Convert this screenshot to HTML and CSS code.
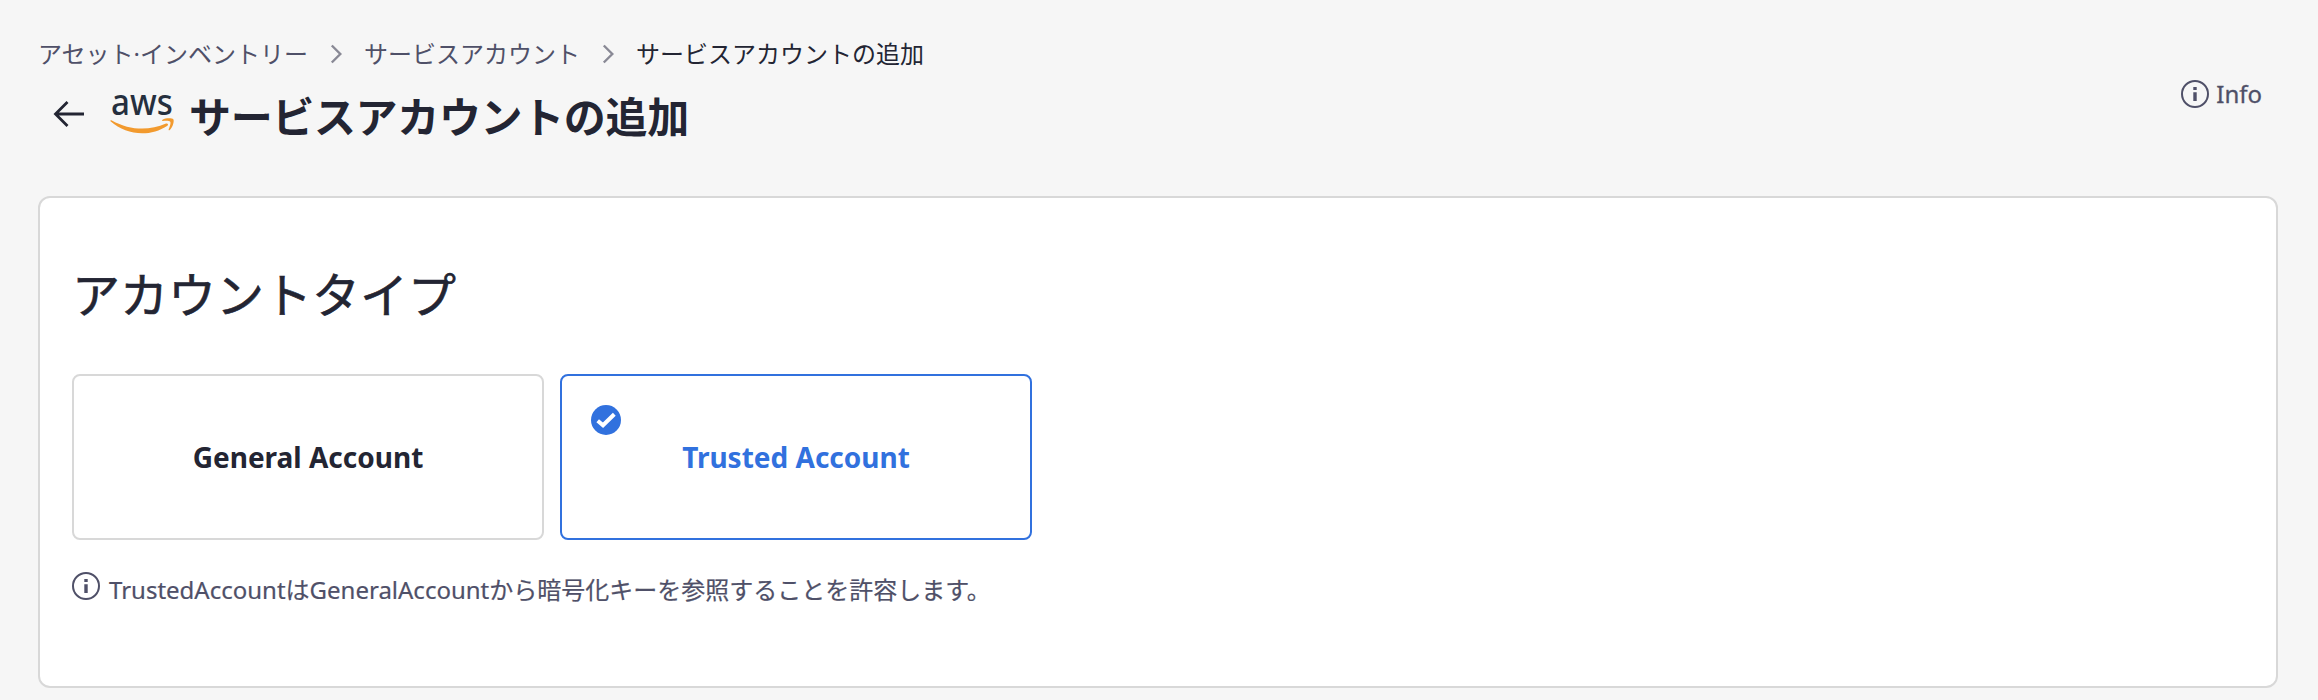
FILE: index.html
```html
<!DOCTYPE html>
<html lang="ja">
<head>
<meta charset="utf-8">
<title>サービスアカウントの追加</title>
<link rel="stylesheet" href="styles.css">
</head>
<body>
<nav class="breadcrumb">
  <span class="crumb">アセット·インベントリー</span>
  <svg class="chevron" viewBox="0 0 56 32"><path d="M23.800 7.500 L32.300 16 L23.800 24.500"/></svg>
  <span class="crumb">サービスアカウント</span>
  <svg class="chevron" viewBox="0 0 56 32"><path d="M23.800 7.500 L32.300 16 L23.800 24.500"/></svg>
  <span class="crumb current">サービスアカウントの追加</span>
</nav>
<header class="page-header">
  <svg class="back" viewBox="0 0 32 32"><path d="M31 16 H2.500 M14.500 4 L2.500 16 L14.500 28"/></svg>
  <svg class="aws" viewBox="0 -12 64 76">
    <text transform="translate(1 30) scale(.895 1)">aws</text>
    <path d="M.5 36.300 C.1 35.500 .9 34.800 1.800 35.400 C20 45.500 39 45.800 56 38.600 C57.700 37.900 58.800 39.700 57.400 40.700 C40 52.400 16.500 50.500 .5 36.300 Z"/>
    <path d="M52.800 36 C51.900 36.100 51.800 35.300 52.500 34.800 C56 32.500 62.300 33 63.300 34.200 C64.500 35.600 63 42 59.800 45 C59.100 45.700 58.300 45.300 58.700 44.300 C59.800 41.600 61.100 38 60.200 36.700 C59.300 35.500 55.600 35.700 52.800 36 Z"/>
  </svg>
  <h1 class="title">サービスアカウントの追加</h1>
  <div class="info">
    <svg class="info-icon" viewBox="0 0 28 28"><circle cx="14" cy="14" r="13"/><path d="M12.300 7h3.400v3h-3.400zM12.300 12.200h3.400v8.800h-3.400z"/></svg>
    <span>Info</span>
  </div>
</header>
<main class="card">
  <h2 class="section-title">アカウントタイプ</h2>
  <div class="options">
    <div class="option">General Account</div>
    <div class="option selected">
      <svg class="check" viewBox="0 0 30 30"><circle cx="15" cy="15" r="15"/><path d="M6.700 15.800 L12 20.300 L23.300 9.300"/></svg>
      Trusted Account
    </div>
  </div>
  <p class="hint">
    <svg class="info-icon" viewBox="0 0 28 28"><circle cx="14" cy="14" r="13"/><path d="M12.300 7h3.400v3h-3.400zM12.300 12.200h3.400v8.800h-3.400z"/></svg>
    <span class="hint-text">TrustedAccountはGeneralAccountから暗号化キーを参照することを許容します。</span>
  </p>
</main>
</body>
</html>
```
FILE: styles.css
```css
* { box-sizing: border-box; }

body {
  margin: 0;
  height: 700px;
  padding: 36px 40px 0 38px;
  overflow: hidden;
  background: #f6f6f6;
  color: #232533;
  font-family: "Noto Sans", "Noto Sans CJK JP", sans-serif;
  font-size: 24px;
}

h1, h2, p { margin: 0; }

svg { display: block; flex: none; }

.breadcrumb {
  display: flex;
  align-items: center;
  height: 36px;
  line-height: 36px;
  color: #4f5068;
  white-space: nowrap;
}

.current { color: #232533; }

.chevron {
  width: 56px;
  height: 32px;
  fill: none;
  stroke: #898995;
  stroke-width: 2.4;
}

.page-header {
  display: flex;
  align-items: flex-start;
  height: 124px;
  padding: 10px 16px 0 15px;
}

.back {
  width: 32px;
  height: 32px;
  margin-top: 16px;
  fill: none;
  stroke: #232533;
  stroke-width: 2.8;
}

.aws {
  width: 64px;
  height: 76px;
  margin: -9px 15px 0 25px;
  overflow: visible;
  fill: #f29a2e;
}

.aws text {
  fill: #252f3e;
  font-family: "Noto Sans", sans-serif;
  font-size: 37px;
  font-weight: 500;
}

.title {
  height: 72px;
  margin-top: -1px;
  line-height: 72px;
  font-size: 42px;
  font-weight: 700;
  letter-spacing: -0.35px;
  white-space: nowrap;
}

.info {
  display: flex;
  align-items: center;
  gap: 7px;
  height: 36px;
  margin-left: auto;
  margin-top: -7px;
  color: #4f5068;
  -webkit-text-stroke: 0.3px currentColor;
}

.info-icon {
  width: 28px;
  height: 28px;
  margin-top: 1px;
  fill: #4f5068;
}

.info-icon circle {
  fill: none;
  stroke: #4f5068;
  stroke-width: 2;
}

.card {
  height: 492px;
  padding: 61px 32px 0;
  border: 2px solid #d8d8d8;
  border-radius: 12px;
  background: #fff;
}

.section-title {
  height: 72px;
  line-height: 72px;
  font-size: 48px;
  font-weight: 400;
  -webkit-text-stroke: 0.6px currentColor;
}

.options {
  display: flex;
  gap: 16px;
  margin-top: 43px;
}

.option {
  position: relative;
  display: flex;
  align-items: center;
  justify-content: center;
  width: 472px;
  height: 166px;
  border: 2px solid #d8d8d8;
  border-radius: 8px;
  font-size: 28px;
  font-weight: 700;
}

.selected {
  border-color: #3171de;
  color: #3171de;
}

.check {
  position: absolute;
  left: 29px;
  top: 29px;
  width: 30px;
  height: 30px;
  fill: #3171de;
}

.check path {
  fill: none;
  stroke: #fff;
  stroke-width: 4;
}

.hint {
  display: flex;
  align-items: flex-start;
  gap: 9px;
  margin-top: 31px;
  color: #4f5068;
}

.hint-text {
  line-height: 38px;
  white-space: nowrap;
  -webkit-text-stroke: 0.2px currentColor;
}
```
